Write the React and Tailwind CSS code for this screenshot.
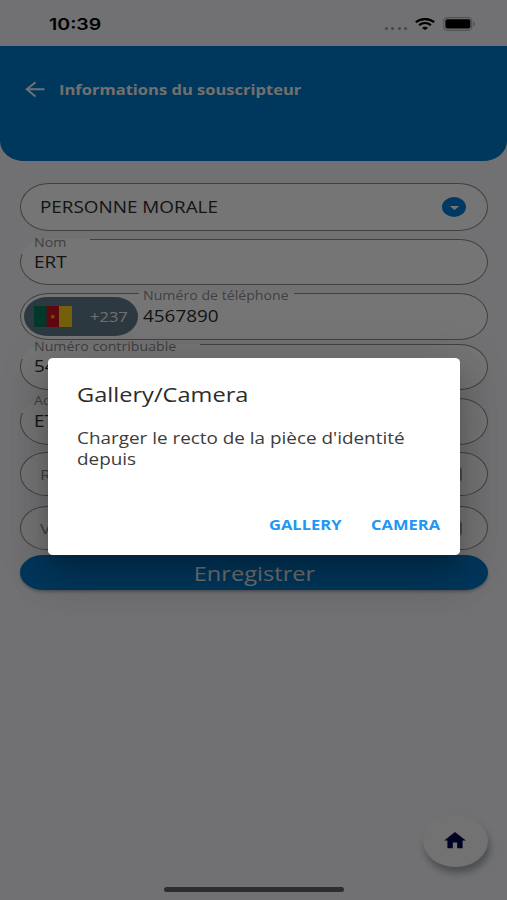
import React from "react";
import { MdHome, MdArrowDropDown } from "react-icons/md";

const font = "font-['Open_Sans',sans-serif]";

// Text is drawn wider than its natural width
function Wide({ className = "", children }) {
    return (
        <span className={`inline-block whitespace-nowrap origin-left scale-x-[1.18] ${className}`}>
            {children}
        </span>
    );
}

function StatusBar() {
    return (
        <div className="h-[46px] flex items-center justify-between pl-[49px] pr-[31px] pt-[2px]">
            <span className="inline-block origin-left scale-x-[1.22] font-['Inter',sans-serif] text-[16px] font-semibold text-black">
                10:39
            </span>
            <div className="flex items-center">
                <div className="flex gap-[3.5px] mt-[9px] mr-[8px]">
                    <span className="w-[3px] h-[2.5px] rounded-full bg-[#98989c]" />
                    <span className="w-[3px] h-[2.5px] rounded-full bg-[#98989c]" />
                    <span className="w-[3px] h-[2.5px] rounded-full bg-[#98989c]" />
                    <span className="w-[3px] h-[2.5px] rounded-full bg-[#98989c]" />
                </div>
                <svg width="20" height="12" viewBox="0 0 20 12" fill="none" stroke="#000" strokeWidth="2.3">
                    <path d="M0.8 4.2C6 -0.1 14 -0.1 19.2 4.2" />
                    <path d="M4.1 7.2C7.6 4.3 12.4 4.3 15.9 7.2" />
                    <path d="M7 9.9C8.8 8.3 11.2 8.3 13 9.9L10 12Z" fill="#000" stroke="none" />
                </svg>
                <svg className="ml-[8px]" width="33" height="14" viewBox="0 0 33 14">
                    <rect x="0.7" y="0.7" width="28" height="12.6" rx="3.6" fill="none" stroke="#b4b4b8" strokeWidth="1.2" />
                    <rect x="2.4" y="2.2" width="25" height="9.4" rx="1.8" fill="#000" />
                    <path d="M30.2 4.8C32.6 5.4 32.6 8.6 30.2 9.2Z" fill="#b4b4b8" />
                </svg>
            </div>
        </div>
    );
}

function Header() {
    return (
        <header className="h-[115px] bg-[#0078c8] rounded-b-[24px_20px] flex items-start pt-[33px] pl-[25px]">
            <svg className="mt-[2px]" width="20" height="17" viewBox="0 0 20 17" fill="none" stroke="#f4f4f4" strokeWidth="2">
                <path d="M19.5 8.3H2M10.5 1.2L1.8 8.3L10.5 15.4" />
            </svg>
            <Wide className="ml-[14px] text-[14px] leading-[21px] font-bold text-[#f4f4f4]">
                Informations du souscripteur
            </Wide>
        </header>
    );
}

// Rounded outline; clip cuts out the part of the border behind the label
function Field({ className = "", clip = "", label, labelClass = "left-[14px]", children }) {
    return (
        <div className={`relative bg-white rounded-[29px/24px] flex items-center ${className}`}>
            <span className={`absolute inset-0 border border-[#8c8c8c] rounded-[29px/24px] ${clip}`} />
            {label && (
                <Wide className={`absolute -top-[5px] text-[12px] leading-[16px] text-[#8a8a8a] ${labelClass}`}>
                    {label}
                </Wide>
            )}
            {children}
        </div>
    );
}

function Form() {
    return (
        <div className="flex flex-col pl-[20px] pr-[19px] pt-[22px] text-[#2c2c2c]">
            <Field className="h-12 pl-[20px] pr-[22px] justify-between">
                <Wide className="text-[16px]">PERSONNE MORALE</Wide>
                <span className="w-[24px] h-[20px] rounded-[50%] bg-[#007fdb] flex items-center justify-center">
                    <MdArrowDropDown className="text-white text-[19px] scale-x-[1.2]" />
                </span>
            </Field>

            <Field
                className="mt-2 h-[46px] pl-[14px]"
                label="Nom"
                labelClass="left-[14px] mt-px"
                clip="[clip-path:polygon(70px_0,100%_0,100%_100%,0_100%,0_15px,70px_15px)]"
            >
                <Wide className="text-[16px]">ERT</Wide>
            </Field>

            <Field
                className="mt-2 h-[47px] pl-[4px]"
                label="Numéro de téléphone"
                labelClass="left-[123px]"
                clip="[clip-path:polygon(0_0,119px_0,119px_10px,274px_10px,274px_0,100%_0,100%_100%,0_100%)]"
            >
                <div className="relative w-[114px] h-[39px] rounded-[24px/20px] bg-[#607d8b] flex items-center pl-[10px]">
                    <svg width="38" height="21" viewBox="0 0 38 21">
                        <rect width="13" height="21" fill="#007a5e" />
                        <rect x="12.5" width="13" height="21" fill="#ce1126" />
                        <rect x="25" width="13" height="21" fill="#fcd116" />
                        <path
                            d="M18.8 7.9L19.4 9.8L21.6 9.8L19.9 11L20.5 12.9L18.8 11.7L17.1 12.9L17.7 11L16 9.8L18.2 9.8Z"
                            fill="#fcd116"
                        />
                    </svg>
                    <Wide className="ml-[18px] text-[14px] text-[#f4f4f4]">+237</Wide>
                </div>
                <Wide className="ml-[5px] mb-px text-[16px]">4567890</Wide>
            </Field>

            <Field
                className="mt-1 h-[46px] pl-[14px]"
                label="Numéro contribuable"
                clip="[clip-path:polygon(180px_0,100%_0,100%_100%,0_100%,0_15px,180px_15px)]"
            >
                <Wide className="text-[16px] mb-[2px]">54</Wide>
            </Field>

            <Field
                className="mt-2 h-[47px] pl-[14px]"
                label="Ad"
                clip="[clip-path:polygon(90px_0,100%_0,100%_100%,0_100%,0_15px,90px_15px)]"
            >
                <Wide className="text-[16px] mb-[2px]">ET</Wide>
            </Field>

            <Field className="mt-[7px] h-[44px] pl-[20px] pr-[26px] justify-between">
                <Wide className="text-[15px] text-[#8a8a8a]">R</Wide>
                <span className="w-[20px] h-[15px] border-2 border-[#a0a0a0] rounded-sm" />
            </Field>

            <Field className="mt-[10px] h-[44px] pl-[20px] pr-[26px] justify-between">
                <Wide className="text-[15px] text-[#8a8a8a]">V</Wide>
                <span className="w-[20px] h-[15px] border-2 border-[#a0a0a0] rounded-sm" />
            </Field>

            <button className="mt-[5px] h-[35px] pt-[2px] rounded-[24px/18px] bg-[#0078c8] text-[#f4f4f4] text-[20px] leading-none flex items-center justify-center shadow-[0_2px_3px_rgba(0,0,0,0.25)]">
                <span className="inline-block scale-x-[1.18]">Enregistrer</span>
            </button>
        </div>
    );
}

function Dialog() {
    return (
        <div className="absolute inset-0 bg-black/54 flex items-start justify-center pt-[358px] pl-[1px]">
            <div className="w-[412px] h-[197px] bg-white rounded-[5px/4px] pl-[29px] pr-[20px] flex flex-col shadow-[0_11px_15px_-7px_rgba(0,0,0,0.2),0_24px_38px_3px_rgba(0,0,0,0.14),0_9px_46px_8px_rgba(0,0,0,0.12)]">
                <h2 className="mt-[23px] text-[20px] leading-[27px] text-[#2c2c2c]">
                    <Wide>Gallery/Camera</Wide>
                </h2>
                <p className="mt-[20px] text-[16px] leading-[21px] text-[#3c3c3c] flex flex-col items-start">
                    <Wide>Charger le recto de la pièce d'identité</Wide>
                    <Wide>depuis</Wide>
                </p>
                <div className="mt-[44px] flex justify-end text-[14px] leading-[21px] font-bold text-[#2196f3]">
                    <button className="w-[102px] text-left">
                        <Wide>GALLERY</Wide>
                    </button>
                    <button className="w-[69px] text-left">
                        <Wide>CAMERA</Wide>
                    </button>
                </div>
            </div>
        </div>
    );
}

export default function App() {
    return (
        <div className={`relative w-[507px] h-[900px] overflow-hidden bg-[#f6f6fa] ${font}`}>
            <StatusBar />
            <Header />
            <Form />

            {/* Home button */}
            <button className="absolute left-[423px] top-[815px] w-[65px] h-[52px] rounded-[50%] bg-[#f8f8fb] flex items-center justify-center pr-[2px] pb-[2px] shadow-[2px_6px_7px_rgba(40,60,75,0.4)]">
                <MdHome className="w-[26px] h-[23px] text-[#000a4a]" preserveAspectRatio="none" />
            </button>

            {/* Home indicator */}
            <div className="absolute left-[164px] top-[887px] w-[180px] h-[5px] rounded-full bg-[#626266]" />

            <Dialog />
        </div>
    );
}
